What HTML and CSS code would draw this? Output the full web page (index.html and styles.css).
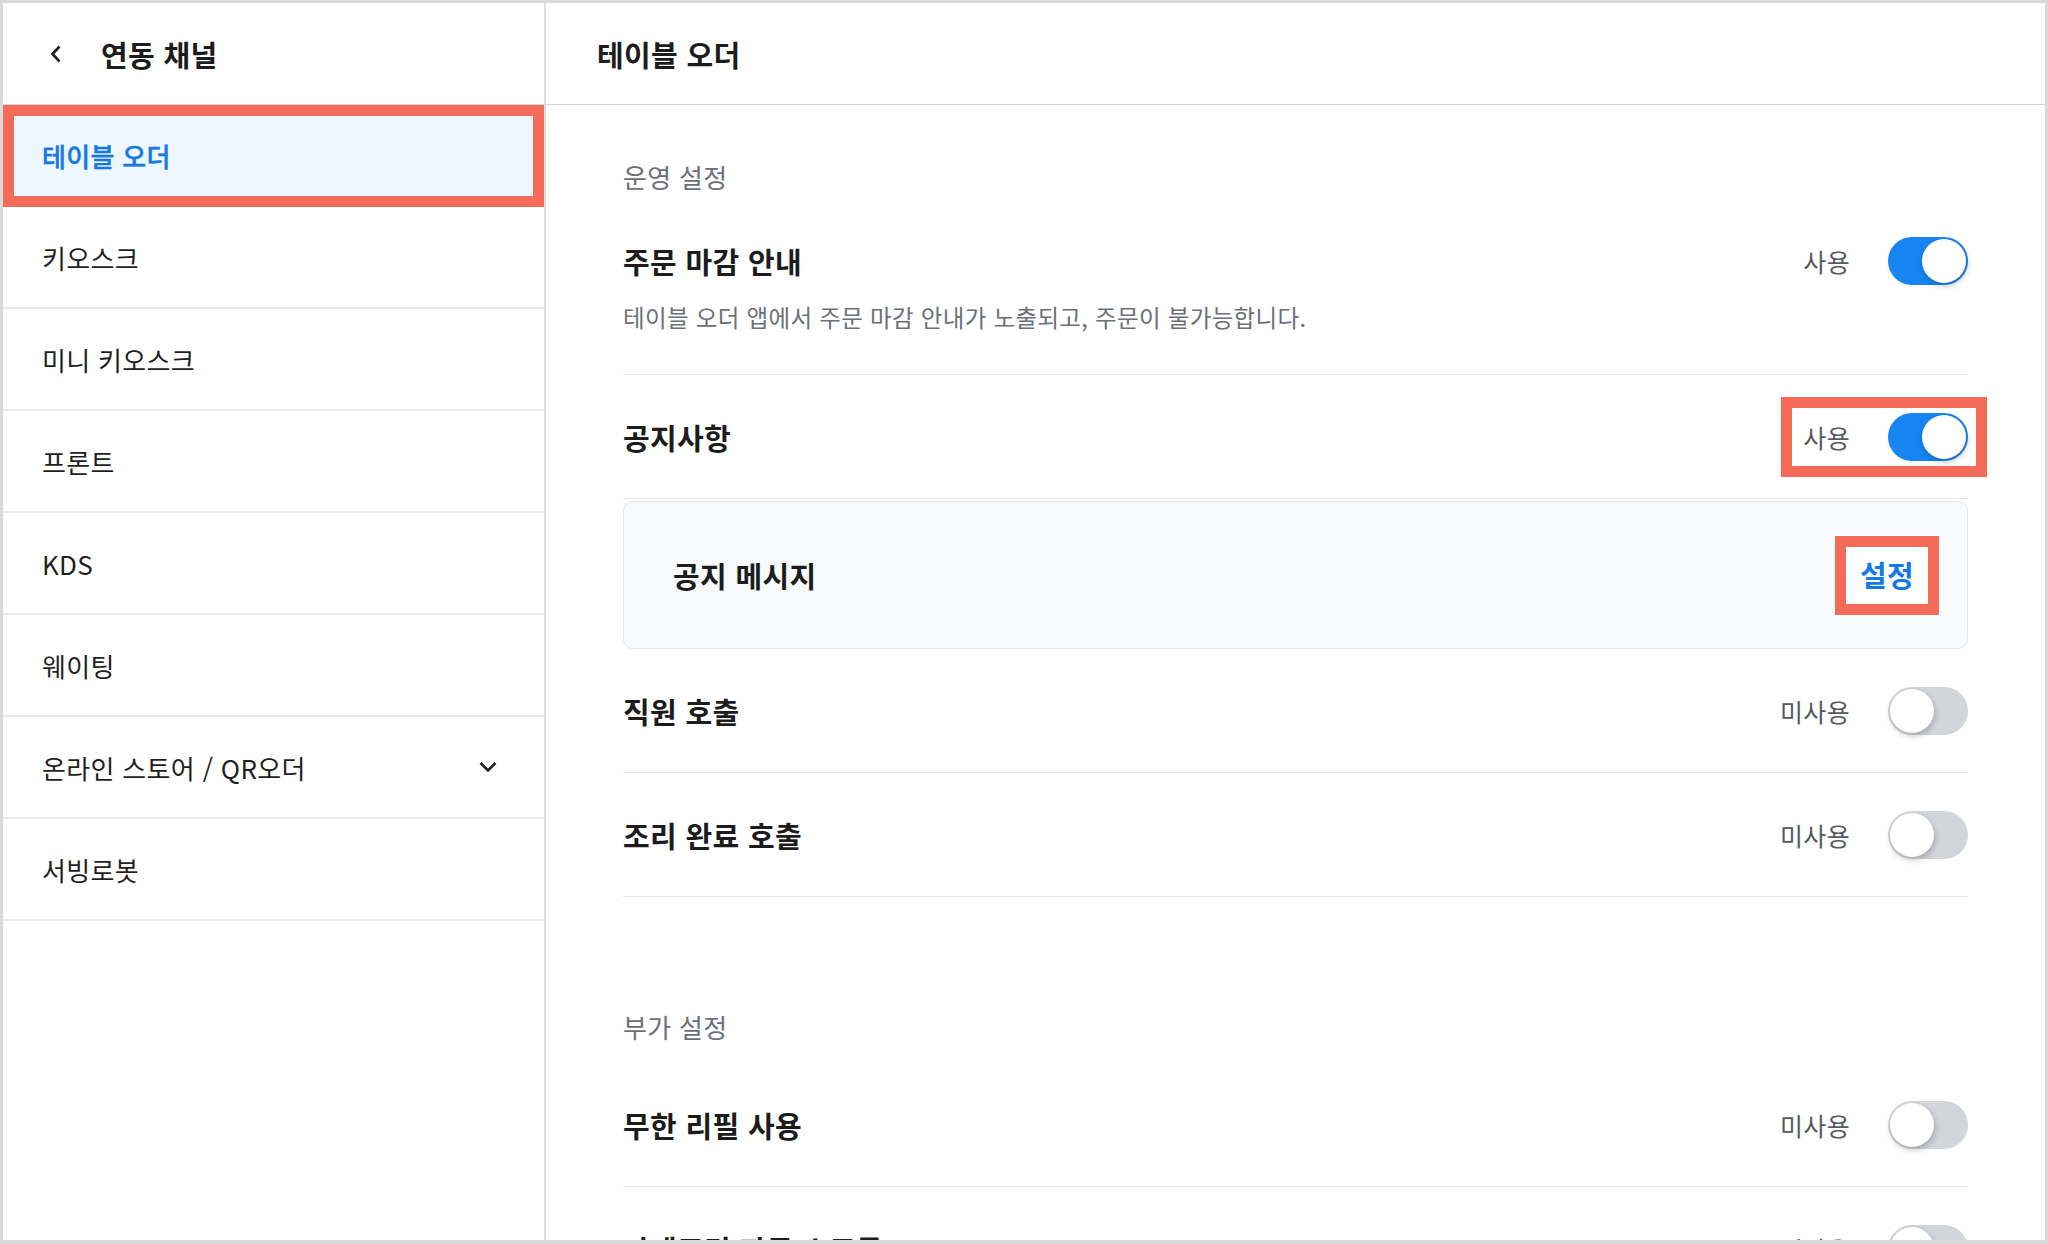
FILE: index.html
```html
<!DOCTYPE html>
<html lang="ko">
<head>
<meta charset="utf-8">
<title>연동 채널 - 테이블 오더</title>
<link rel="stylesheet" href="styles.css">
</head>
<body>
<div class="app">
  <aside class="sidebar">
    <div class="side-head">
      <svg class="back" width="12" height="18" viewBox="0 0 12 18"><path d="M9.5 1.5 L2.5 9 L9.5 16.5" fill="none" stroke="#1f1f1f" stroke-width="2.6" stroke-linejoin="miter"/></svg>
      <h1 class="side-title">연동 채널</h1>
    </div>
    <ul class="side-list">
      <li class="side-item active">테이블 오더</li>
      <li class="side-item">키오스크</li>
      <li class="side-item">미니 키오스크</li>
      <li class="side-item">프론트</li>
      <li class="side-item">KDS</li>
      <li class="side-item">웨이팅</li>
      <li class="side-item has-sub"><span>온라인 스토어 / QR오더</span>
        <svg width="20" height="12" viewBox="0 0 20 12"><path d="M2.5 2 L10 9.5 L17.5 2" fill="none" stroke="#1f1f1f" stroke-width="2.6"/></svg>
      </li>
      <li class="side-item">서빙로봇</li>
    </ul>
  </aside>
  <main class="main">
    <div class="main-head"><h2 class="main-title">테이블 오더</h2></div>
    <div class="content">
      <section class="section">
        <h3 class="section-title">운영 설정</h3>
        <div class="row row-desc">
          <div class="row-top">
            <span class="row-label">주문 마감 안내</span>
            <div class="ctrl"><span class="state">사용</span><span class="toggle on"><span class="knob"></span></span></div>
          </div>
          <p class="desc">테이블 오더 앱에서 주문 마감 안내가 노출되고, 주문이 불가능합니다.</p>
        </div>
        <div class="row">
          <span class="row-label">공지사항</span>
          <div class="ctrl hl-ctrl"><span class="state">사용</span><span class="toggle on"><span class="knob"></span></span></div>
        </div>
        <div class="card">
          <span class="card-label">공지 메시지</span>
          <span class="set-btn">설정</span>
        </div>
        <div class="row">
          <span class="row-label">직원 호출</span>
          <div class="ctrl"><span class="state">미사용</span><span class="toggle"><span class="knob"></span></span></div>
        </div>
        <div class="row">
          <span class="row-label">조리 완료 호출</span>
          <div class="ctrl"><span class="state">미사용</span><span class="toggle"><span class="knob"></span></span></div>
        </div>
      </section>
      <section class="section section-2">
        <h3 class="section-title">부가 설정</h3>
        <div class="row">
          <span class="row-label">무한 리필 사용</span>
          <div class="ctrl"><span class="state">미사용</span><span class="toggle"><span class="knob"></span></span></div>
        </div>
        <div class="row">
          <span class="row-label">카테고리 자동 스크롤</span>
          <div class="ctrl"><span class="state">미사용</span><span class="toggle"><span class="knob"></span></span></div>
        </div>
      </section>
    </div>
  </main>
</div>
</body>
</html>
```

FILE: styles.css
```css
* { box-sizing: border-box; }
html, body { margin: 0; padding: 0; }
body {
  background: #dadada;
  font-family: "Noto Sans CJK KR", "Noto Sans", sans-serif;
  color: #1f1f1f;
  width: 2048px;
  height: 1244px;
  overflow: hidden;
  letter-spacing: 0.02em;
}
.app {
  margin: 3px 3px 4px 3px;
  width: 2042px;
  height: 1237px;
  background: #fff;
  display: flex;
  overflow: hidden;
}

/* Sidebar */
.sidebar {
  width: 543px;
  flex: none;
  border-right: 2px solid #dcdcdc;
}
.side-head {
  height: 102px;
  border-bottom: 1px solid #d6d6d6;
  display: flex;
  align-items: center;
  padding-left: 47px;
  gap: 39px;
}
.back { display: block; }
.side-title {
  margin: 0;
  font-size: 29px;
  font-weight: 700;
  line-height: 40px;
  color: #1c1c1c;
}
.side-list { list-style: none; margin: 0; padding: 0; }
.side-item {
  height: 102px;
  border-bottom: 2px solid #ebebeb;
  display: flex;
  align-items: center;
  padding: 0 46px 0 39px;
  font-size: 26px;
  color: #1f1f1f;
}
.side-item.active {
  background: #eef6fe;
  color: #1479e5;
  font-weight: 500;
  -webkit-text-stroke: 0.4px #1479e5;
  outline: 11px solid #f56b5a;
  outline-offset: -11px;
  border-bottom-color: transparent;
}
.side-item.has-sub { justify-content: space-between; }
.side-item.has-sub svg { display: block; }

/* Main */
.main { flex: 1; min-width: 0; display: flex; flex-direction: column; }
.main-head {
  height: 102px;
  flex: none;
  border-bottom: 1px solid #d6d6d6;
  display: flex;
  align-items: center;
  padding-left: 51px;
}
.main-title {
  margin: 0;
  font-size: 29px;
  font-weight: 700;
  line-height: 40px;
  color: #1c1c1c;
}
.content {
  padding: 55px 77px 0 77px;
}
.section-2 { margin-top: 113px; }
.section-title {
  margin: 0 0 19px 0;
  font-size: 26px;
  font-weight: 400;
  line-height: 34px;
  color: #6b7078;
}
.row {
  display: flex;
  align-items: center;
  justify-content: space-between;
  padding: 38px 0 37px 0;
  border-bottom: 1px solid #e6e7ea;
}
.row-desc {
  display: block;
  padding: 24px 0 40px 0;
}
.row-top {
  display: flex;
  align-items: center;
  justify-content: space-between;
}
.row-label {
  font-size: 29px;
  font-weight: 700;
  line-height: 44px;
  color: #1c1c1c;
}
.desc {
  margin: 15px 0 0 0;
  font-size: 23.5px;
  line-height: 34px;
  color: #6b7078;
}
.ctrl {
  display: flex;
  align-items: center;
  gap: 38px;
}
.state {
  font-size: 25px;
  line-height: 34px;
  color: #555a61;
}
.hl-ctrl {
  border: 11px solid #f56b5a;
  padding: 5px 8px 5px 11px;
  margin: -16px -19px -16px -22px;
}
.toggle {
  position: relative;
  display: block;
  width: 80px;
  height: 48px;
  border-radius: 24px;
  background: #d2d5da;
}
.toggle.on { background: #1685f2; }
.knob {
  position: absolute;
  top: 2px;
  left: 2px;
  width: 44px;
  height: 44px;
  border-radius: 50%;
  background: #fff;
  box-shadow: 1px 3px 6px rgba(0, 0, 0, 0.22);
}
.toggle.on .knob { left: 34px; }

/* Notice card */
.card {
  margin-top: 2px;
  height: 148px;
  border: 1px solid #e4e6e9;
  border-radius: 10px;
  background: #f9fafb;
  display: flex;
  align-items: center;
  justify-content: space-between;
  padding: 0 28px 0 49px;
}
.card-label {
  font-size: 29px;
  font-weight: 700;
  line-height: 40px;
  color: #1c1c1c;
}
.set-btn {
  border: 11px solid #f56b5a;
  padding: 9px 14px 12px 14px;
  font-size: 29px;
  font-weight: 700;
  line-height: 36px;
  color: #1479e5;
  background: #fff;
}
```
